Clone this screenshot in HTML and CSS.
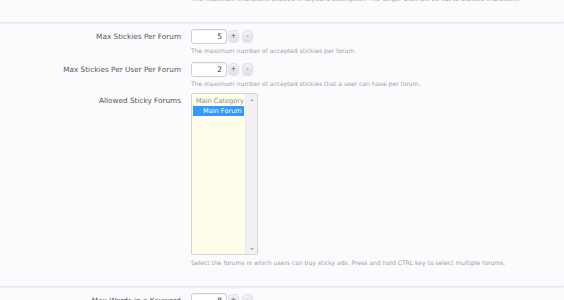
FILE: index.html
```html
<!DOCTYPE html>
<html>
<head>
<meta charset="utf-8">
<link rel="stylesheet" href="styles.css">
</head>
<body>
<div class="page">
  <div class="intro">
    <p class="hint">The maximum characters allowed in keyword description. The longer ones will be cut to allowed characters.</p>
  </div>
  <div class="sep"></div>
  <div class="group">
    <div class="row">
      <div class="label">Max Stickies Per Forum</div>
      <div class="control">
        <div class="spin"><span class="num">5</span><span class="btn plus">+</span><span class="btn minus">-</span></div>
        <p class="hint">The maximum number of accepted stickies per forum.</p>
      </div>
    </div>
    <div class="row">
      <div class="label">Max Stickies Per User Per Forum</div>
      <div class="control">
        <div class="spin"><span class="num">2</span><span class="btn plus">+</span><span class="btn minus">-</span></div>
        <p class="hint">The maximum number of accepted stickies that a user can have per forum.</p>
      </div>
    </div>
    <div class="row row-list">
      <div class="label">Allowed Sticky Forums</div>
      <div class="control">
        <div class="listbox">
          <div class="opts">
            <div class="opt">Main Category</div>
            <div class="opt sel">Main Forum</div>
          </div>
          <div class="scroll"><span class="arrow up"></span><span class="arrow down"></span></div>
        </div>
        <p class="hint hint-list">Select the forums in which users can buy sticky ads. Press and hold CTRL key to select multiple forums.</p>
      </div>
    </div>
  </div>
  <div class="sep"></div>
  <div class="group">
    <div class="row">
      <div class="label">Max Words in a Keyword</div>
      <div class="control">
        <div class="spin"><span class="num">8</span><span class="btn plus">+</span><span class="btn minus">-</span></div>
      </div>
    </div>
  </div>
</div>
</body>
</html>
```

FILE: styles.css
```css
html, body {
  margin: 0;
  padding: 0;
}
body {
  background: #fbfbfd;
  font-family: "DejaVu Sans", Verdana, sans-serif;
  overflow: hidden;
}
.page {
  width: 564px;
  height: 300px;
  overflow: hidden;
}
p {
  margin: 0;
}
.intro {
  margin-top: -6px;
  height: 28px;
  padding-left: 192px;
}
.sep {
  height: 1px;
  background: #e6eaef;
  box-shadow: 0 1px 1px rgba(222, 228, 236, 0.5);
}
.group {
  padding: 6px 0 18px;
}
.row {
  display: grid;
  grid-template-columns: 181px auto;
  column-gap: 10px;
  align-items: start;
}
.row + .row {
  margin-top: 6px;
}
.row-list {
  margin-top: 4px !important;
}
.label {
  font-size: 7.3px;
  line-height: 15px;
  color: #555;
  text-align: right;
  white-space: nowrap;
}
.hint {
  font-size: 6.05px;
  line-height: 10px;
  color: #a0a0a4;
  white-space: nowrap;
}
.control .hint {
  margin-top: 2px;
}
.control .hint-list {
  margin-top: 3px;
}
.spin {
  display: flex;
  align-items: center;
  height: 15px;
}
.num {
  box-sizing: border-box;
  width: 36px;
  height: 15px;
  border: 1px solid #d0d0d4;
  border-radius: 3px;
  background: #fff;
  box-shadow: inset 0 1px 1px rgba(0, 0, 0, 0.05);
  text-align: right;
  padding-right: 4px;
  font-size: 7.5px;
  line-height: 13px;
  color: #333;
}
.btn {
  box-sizing: border-box;
  width: 11px;
  height: 12px;
  margin-top: -1px;
  border-radius: 4px;
  background: linear-gradient(#f2f3f7, #e0e2ea);
  border: 1px solid #dfe0e7;
  box-shadow: 0 1px 1px rgba(0, 0, 0, 0.1);
  font-size: 7px;
  line-height: 10px;
  text-align: center;
  color: #555;
}
.plus {
  margin-left: 1px;
}
.minus {
  margin-left: 3px;
}
.listbox {
  box-sizing: border-box;
  width: 67px;
  height: 162px;
  border: 1px solid #d4d4d4;
  border-radius: 2px;
  display: flex;
  overflow: hidden;
}
.opts {
  flex: 1;
  background: #fefeea;
  padding: 2px 1px;
}
.opt {
  font-size: 6.6px;
  line-height: 10px;
  color: #8a8a8a;
  padding-left: 3px;
  white-space: nowrap;
}
.opt.sel {
  background: #3399ff;
  color: #fff;
  padding-left: 10px;
}
.scroll {
  width: 11px;
  background: #f1f1f1;
  border-left: 1px solid #ececec;
  display: flex;
  flex-direction: column;
  justify-content: space-between;
  align-items: center;
  padding: 5px 0 4px;
}
.arrow {
  width: 0;
  height: 0;
  border-left: 2px solid transparent;
  border-right: 2px solid transparent;
}
.arrow.up {
  border-bottom: 2px solid #a3a3a3;
}
.arrow.down {
  border-top: 2px solid #a3a3a3;
}
```
